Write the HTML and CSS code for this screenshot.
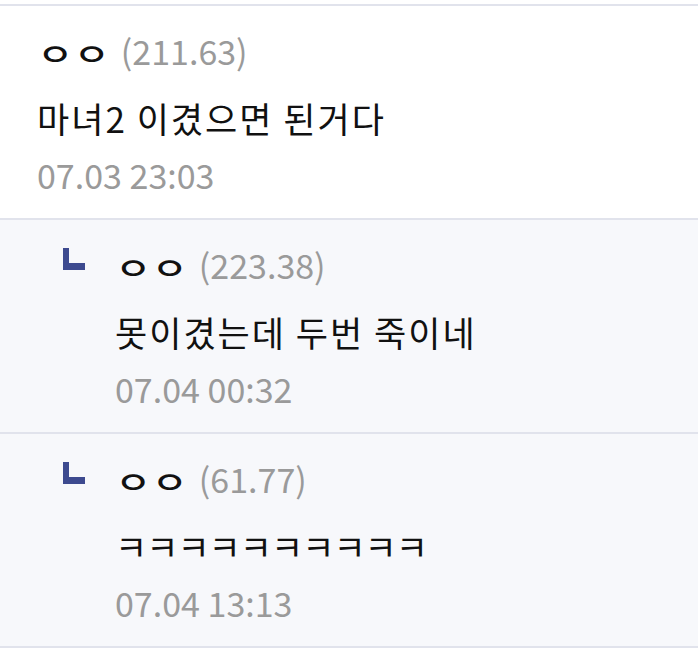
FILE: index.html
```html
<!DOCTYPE html>
<html>
<head>
  <meta charset="utf-8">
  <title>댓글</title>
  <link rel="stylesheet" href="styles.css">
</head>
<body>
  <ul class="comment-list">
    <li class="comment">
      <div class="comment-body">
        <div class="comment-head">
          <span class="nick">ㅇㅇ</span>
          <span class="ip">(211.63)</span>
        </div>
        <p class="comment-text">마녀2 이겼으면 된거다</p>
        <div class="comment-date">07.03 23:03</div>
      </div>
    </li>
    <li class="comment reply">
      <svg class="reply-icon" width="22" height="22" viewBox="0 0 22 22">
        <path d="M0 0h6v15h16v7H0z" fill="#3d4a8f"/>
      </svg>
      <div class="comment-body">
        <div class="comment-head">
          <span class="nick">ㅇㅇ</span>
          <span class="ip">(223.38)</span>
        </div>
        <p class="comment-text">못이겼는데 두번 죽이네</p>
        <div class="comment-date">07.04 00:32</div>
      </div>
    </li>
    <li class="comment reply">
      <svg class="reply-icon" width="22" height="22" viewBox="0 0 22 22">
        <path d="M0 0h6v15h16v7H0z" fill="#3d4a8f"/>
      </svg>
      <div class="comment-body">
        <div class="comment-head">
          <span class="nick">ㅇㅇ</span>
          <span class="ip">(61.77)</span>
        </div>
        <p class="comment-text jamo">ㅋㅋㅋㅋㅋㅋㅋㅋㅋㅋ</p>
        <div class="comment-date">07.04 13:13</div>
      </div>
    </li>
  </ul>
</body>
</html>
```

FILE: styles.css
```css
  body {
    margin: 0;
    background-color: #fff;
    font-family: "Noto Sans CJK KR", "Noto Sans", sans-serif;
    color: #111;
  }

  .comment-list {
    list-style: none;
    margin: 4px 0 0;
    padding: 0;
    border-top: 2px solid #e1e3ec;
  }

  .comment {
    display: flex;
    padding: 23px 0 19px 37px;
    border-bottom: 2px solid #e1e3ec;
    background-color: #fff;
  }

  .comment.reply {
    padding-left: 63px;
    background-color: #f7f8fb;
  }

  .reply-icon {
    flex: none;
    margin: 5px 30px 0 0;
  }

  .comment-head {
    height: 44px;
    line-height: 44px;
    font-size: 34px;
    white-space: nowrap;
  }

  .nick {
    display: inline-block;
    font-size: 30px;
    font-weight: 500;
    color: #111;
    transform: scale(1.32, 1);
    transform-origin: left center;
    margin-right: 21px;
  }

  .ip {
    color: #9a9a9a;
  }

  .comment-text {
    margin: 17px 0 0;
    font-size: 35px;
    line-height: 56px;
    height: 56px;
    letter-spacing: 2px;
    white-space: nowrap;
  }

  .comment-text.jamo {
    letter-spacing: -1px;
  }

  .comment-date {
    margin-top: 5px;
    font-size: 34px;
    line-height: 48px;
    color: #9a9a9a;
  }
```
